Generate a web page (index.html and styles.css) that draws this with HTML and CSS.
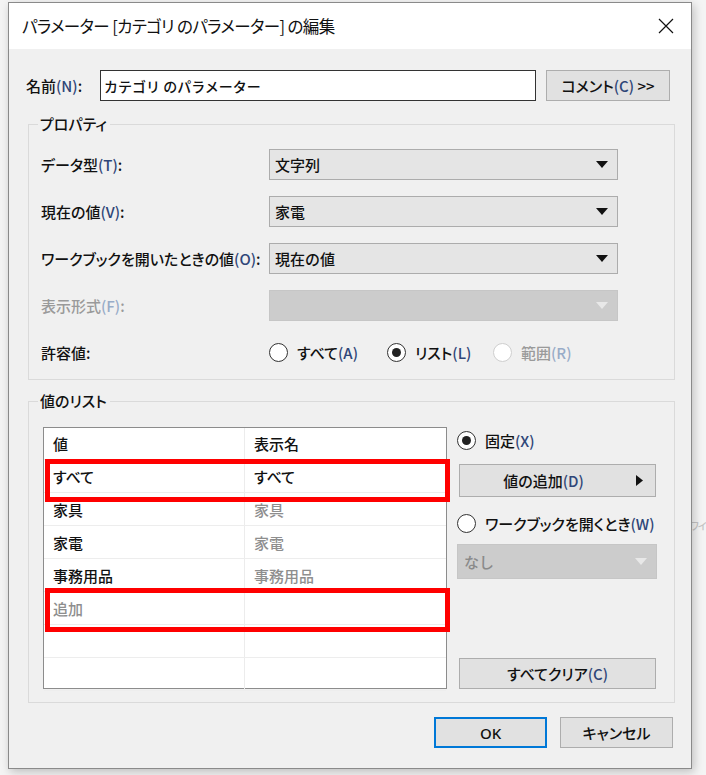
FILE: index.html
```html
<!DOCTYPE html>
<html lang="ja">
<head>
<meta charset="utf-8">
<title>パラメーターの編集</title>
<link rel="stylesheet" href="styles.css">
</head>
<body>
<div class="behind">ワイ</div>
<div class="dialog">
  <div class="titlebar">
    <span class="title">パラメーター [カテゴリ のパラメーター] の編集</span>
    <svg class="close" width="16" height="16" viewBox="0 0 16 16"><path d="M1 1L15 15M15 1L1 15" stroke="#111" stroke-width="1.2" fill="none"/></svg>
  </div>
  <div class="content">
    <div class="name-row">
      <span class="lbl name-lbl">名前<span class="mn">(N)</span>:</span>
      <div class="input">カテゴリ のパラメーター</div>
      <div class="btn comment"><span>コメント<span class="mn">(C)</span> &gt;&gt;</span></div>
    </div>

    <fieldset class="group props">
      <legend>プロパティ</legend>
      <div class="prop-grid">
        <span class="lbl">データ型<span class="mn">(T)</span>:</span>
        <div class="combo"><span>文字列</span><svg width="12" height="7" viewBox="0 0 12 7"><path d="M0 0H12L6 7Z" fill="#111"/></svg></div>

        <span class="lbl">現在の値<span class="mn">(V)</span>:</span>
        <div class="combo"><span>家電</span><svg width="12" height="7" viewBox="0 0 12 7"><path d="M0 0H12L6 7Z" fill="#111"/></svg></div>

        <span class="lbl">ワークブックを開いたときの値<span class="mn">(O)</span>:</span>
        <div class="combo"><span>現在の値</span><svg width="12" height="7" viewBox="0 0 12 7"><path d="M0 0H12L6 7Z" fill="#111"/></svg></div>

        <span class="lbl disabled">表示形式<span class="mn">(F)</span>:</span>
        <div class="combo off"><span></span><svg width="12" height="7" viewBox="0 0 12 7"><path d="M0 0H12L6 7Z" fill="#e8e8e8"/></svg></div>

        <span class="lbl">許容値:</span>
        <div class="radios">
          <span class="radio r-all"><i class="dot"></i>すべて<span class="mn">(A)</span></span>
          <span class="radio r-list"><i class="dot on"></i>リスト<span class="mn">(L)</span></span>
          <span class="radio disabled"><i class="dot off"></i>範囲<span class="mn">(R)</span></span>
        </div>
      </div>
    </fieldset>

    <fieldset class="group values">
      <legend>値のリスト</legend>
      <div class="list-area">
        <div class="table">
          <div class="row head"><span>値</span><span>表示名</span></div>
          <div class="row"><span>すべて</span><span>すべて</span></div>
          <div class="row"><span>家具</span><span class="muted">家具</span></div>
          <div class="row"><span>家電</span><span class="muted">家電</span></div>
          <div class="row"><span>事務用品</span><span class="muted">事務用品</span></div>
          <div class="row"><span class="muted">追加</span><span></span></div>
          <div class="row"><span></span><span></span></div>
          <div class="row"><span></span><span></span></div>
          <div class="mark mark-1"></div>
          <div class="mark mark-2"></div>
        </div>
        <div class="side">
          <span class="radio fixed"><i class="dot on"></i>固定<span class="mn">(X)</span></span>
          <div class="btn add"><span>値の追加<span class="mn">(D)</span></span><svg class="play" width="7" height="11" viewBox="0 0 7 11"><path d="M0 0L7 5.5L0 11Z" fill="#111"/></svg></div>
          <span class="radio wb"><i class="dot"></i>ワークブックを開くとき<span class="mn">(W)</span></span>
          <div class="combo off none"><span>なし</span><svg width="12" height="7" viewBox="0 0 12 7"><path d="M0 0H12L6 7Z" fill="#e8e8e8"/></svg></div>
          <div class="btn clear"><span>すべてクリア<span class="mn">(C)</span></span></div>
        </div>
      </div>
    </fieldset>

    <div class="actions">
      <div class="btn ok">OK</div>
      <div class="btn cancel">キャンセル</div>
    </div>
  </div>
</div>
</body>
</html>
```
FILE: styles.css
```css
* { box-sizing: border-box; }

html, body {
  margin: 0;
  padding: 0;
}

body {
  width: 706px;
  height: 775px;
  overflow: hidden;
  background: #f4f4f4;
  font-family: "Noto Sans CJK JP", "Noto Sans", sans-serif;
  font-size: 15px;
  font-weight: 500;
  color: #111;
  position: relative;
}

.behind {
  position: absolute;
  left: 690px;
  top: 518px;
  font-size: 10px;
  letter-spacing: -1px;
  font-feature-settings: "palt";
  color: #c4c4c4;
  white-space: nowrap;
}

.dialog {
  position: relative;
  margin: 2px 0 0 8px;
  width: 684px;
  height: 767px;
  border: 1px solid #8a8a8a;
  background: #f0f0f0;
  box-shadow: 2px 3px 9px rgba(0, 0, 0, 0.22);
  display: flex;
  flex-direction: column;
}

.titlebar {
  height: 46px;
  background: #ffffff;
  display: flex;
  align-items: center;
  justify-content: space-between;
  padding: 0 17px 0 13px;
  flex: none;
}

.title {
  font-size: 16.5px;
  font-weight: 400;
  color: #111;
  font-feature-settings: "palt";
  letter-spacing: -0.6px;
}

.close { display: block; }

.content {
  flex: 1;
  padding: 21px 16px 0 19px;
  display: flex;
  flex-direction: column;
}

.mn { color: #2f4678; }
.disabled { color: #9a9a9a; }
.disabled .mn { color: #98acc8; }
.lbl { white-space: nowrap; font-feature-settings: "palt"; }

/* name row */
.name-row {
  display: flex;
  align-items: center;
  height: 31px;
  margin-left: -2px;
  padding-right: 3px;
}

.name-lbl { width: 74px; }

.input {
  width: 436px;
  height: 31px;
  border: 1px solid #333;
  background: #fff;
  padding-left: 3px;
  display: flex;
  align-items: center;
  font-size: 14px;
}

.btn {
  background: #e1e1e1;
  border: 1px solid #adadad;
  display: flex;
  align-items: center;
  justify-content: center;
  white-space: nowrap;
  font-feature-settings: "palt";
}

.comment {
  margin-left: 10px;
  width: 124px;
  height: 31px;
}

/* group boxes */
.group {
  margin: 0;
  border: 1px solid #dadada;
  min-width: 0;
}

.group legend {
  padding: 0 3px 0 2px;
  line-height: 20px;
  font-feature-settings: "palt";
}

.props {
  margin-top: 13px;
  padding: 15px 15px 11px 12px;
}

.props legend { margin-left: -3px; }

.prop-grid {
  display: grid;
  grid-template-columns: 228px 349px;
  grid-auto-rows: 31px;
  row-gap: 16px;
  align-items: center;
}

.combo {
  height: 31px;
  background: #e5e5e5;
  border: 1px solid #acacac;
  display: flex;
  align-items: center;
  justify-content: space-between;
  padding: 0 9px 0 5px;
}

.combo.off {
  background: #cccccc;
  border-color: #c6c6c6;
  color: #8a8a8a;
}

.combo svg { display: block; }

.radios {
  display: flex;
  align-items: center;
}

.radio {
  display: flex;
  align-items: center;
  white-space: nowrap;
  font-feature-settings: "palt";
}

.r-all { width: 118px; }
.r-list { width: 106px; }

.dot {
  width: 19px;
  height: 19px;
  border: 1px solid #333;
  border-radius: 50%;
  background: #fff;
  margin-right: 9px;
  display: flex;
  align-items: center;
  justify-content: center;
  flex: none;
}

.dot.on::after {
  content: "";
  width: 9px;
  height: 9px;
  border-radius: 50%;
  background: #222;
}

.dot.off { border-color: #cfcfcf; }

/* values list */
.values {
  margin-top: 11px;
  padding: 16px 15px 13px 14px;
}

.values legend { margin-left: -5px; }

.list-area {
  display: flex;
  gap: 10px;
}

.table {
  position: relative;
  width: 404px;
  height: 262px;
  border: 1px solid #8c8c8c;
  background: #fff;
}

.row {
  display: grid;
  grid-template-columns: 201px 1fr;
  height: 33px;
  border-bottom: 1px solid #ededed;
}

.row.head { height: 32px; }

.row:last-of-type { border-bottom: none; height: 31px; }

.row span {
  display: flex;
  align-items: center;
  padding-left: 9px;
  font-feature-settings: "palt";
}

.row span:first-child { border-right: 1px solid #ececec; }

.muted { color: #8e8e8e; }

.mark {
  position: absolute;
  left: 1px;
  width: 405px;
  border: 5px solid #ff0000;
}

.mark-1 { top: 31px; height: 43px; }
.mark-2 { top: 160px; height: 44px; }

.side {
  width: 200px;
  display: flex;
  flex-direction: column;
}

.fixed { margin-top: 3px; height: 20px; }

.add {
  margin-top: 14px;
  height: 33px;
  margin-left: 2px;
  width: 197px;
  padding-right: 28px;
  position: relative;
}

.play {
  position: absolute;
  right: 12px;
  top: 10px;
}

.wb { margin-top: 16px; height: 20px; }

.none {
  margin-top: 11px;
  height: 35px;
  padding-left: 6px;
}

.clear {
  margin-top: auto;
  margin-left: 2px;
  width: 197px;
  height: 31px;
}

/* dialog buttons */
.actions {
  display: flex;
  justify-content: flex-end;
  gap: 13px;
  margin-top: 14px;
  padding-right: 2px;
}

.actions .btn {
  width: 113px;
  height: 31px;
}

.ok {
  border-color: #0078d7;
  box-shadow: inset 0 0 0 1px #0078d7;
  font-family: "Noto Sans", sans-serif;
}
```
